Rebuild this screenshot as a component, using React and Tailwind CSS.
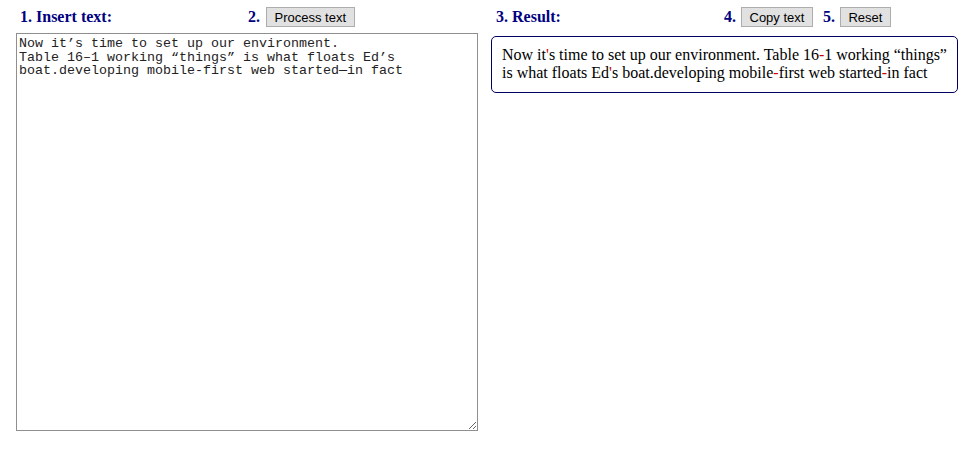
import React, { useState } from "react";

const RED = "text-[#d00000]";

const resultParts = [
  "Now it",
  ["'"],
  "s time to set up our environment. Table 16",
  ["-"],
  "1 working \u201cthings\u201d is what floats Ed",
  ["'"],
  "s boat.developing mobile",
  ["-"],
  "first web started",
  ["-"],
  "in fact",
];

const initialText =
  "Now it\u2019s time to set up our environment.\nTable 16\u20131 working \u201cthings\u201d is what floats Ed\u2019s\nboat.developing mobile-first web started\u2014in fact";

const Label = ({ children, className = "" }) => (
  <span
    className={`text-[16px] font-bold text-[#000080] ${className}`}
    style={{ fontFamily: '"Liberation Serif", serif' }}
  >
    {children}
  </span>
);

const Btn = ({ children, className = "" }) => (
  <button
    className={`h-[20px] border border-[#adadad] bg-[#e1e1e1] px-[7.5px] text-[13px] leading-none text-black ${className}`}
    style={{ fontFamily: '"Liberation Sans", Arial, sans-serif' }}
  >
    {children}
  </button>
);

export default function App() {
  const [text, setText] = useState(initialText);

  return (
    <div className="flex h-[462px] w-[967px] bg-white pl-[16px] pt-[7px]">
      {/* left panel */}
      <div className="flex w-[462px] flex-col">
        <div className="flex h-[20px] items-center">
          <Label className="w-[232px] pl-[4px]">1. Insert text:</Label>
          <Label>2.</Label>
          <Btn className="ml-[6px]">Process text</Btn>
        </div>
        <textarea
          value={text}
          onChange={(e) => setText(e.target.value)}
          className="mt-[6px] h-[398px] w-[462px] resize-y border border-[#8f8f8f] px-[2px] pt-[3px] pb-[2px] text-[13.33px] leading-[13.5px] text-[#222] outline-none"
          style={{ fontFamily: '"Liberation Mono", "Courier New", monospace' }}
        />
      </div>

      {/* right panel */}
      <div className="ml-[13px] flex w-[467px] flex-col">
        <div className="flex h-[20px] items-center">
          <Label className="w-[233px] pl-[5px]">3. Result:</Label>
          <Label>4.</Label>
          <Btn className="ml-[5px]">Copy text</Btn>
          <Label className="ml-[10px]">5.</Label>
          <Btn className="ml-[5px]">Reset</Btn>
        </div>
        <div
          className="mt-[9px] h-[57px] w-[467px] rounded-[5px] border border-[#000060] pl-[10px] pr-[4px] pt-[9px] text-[16px] leading-[18px] text-black"
          style={{ fontFamily: '"Liberation Serif", "Times New Roman", serif' }}
        >
          {resultParts.map((p, i) =>
            Array.isArray(p) ? (
              <span key={i} className={RED}>
                {p[0]}
              </span>
            ) : (
              <span key={i}>{p}</span>
            )
          )}
        </div>
      </div>
    </div>
  );
}
